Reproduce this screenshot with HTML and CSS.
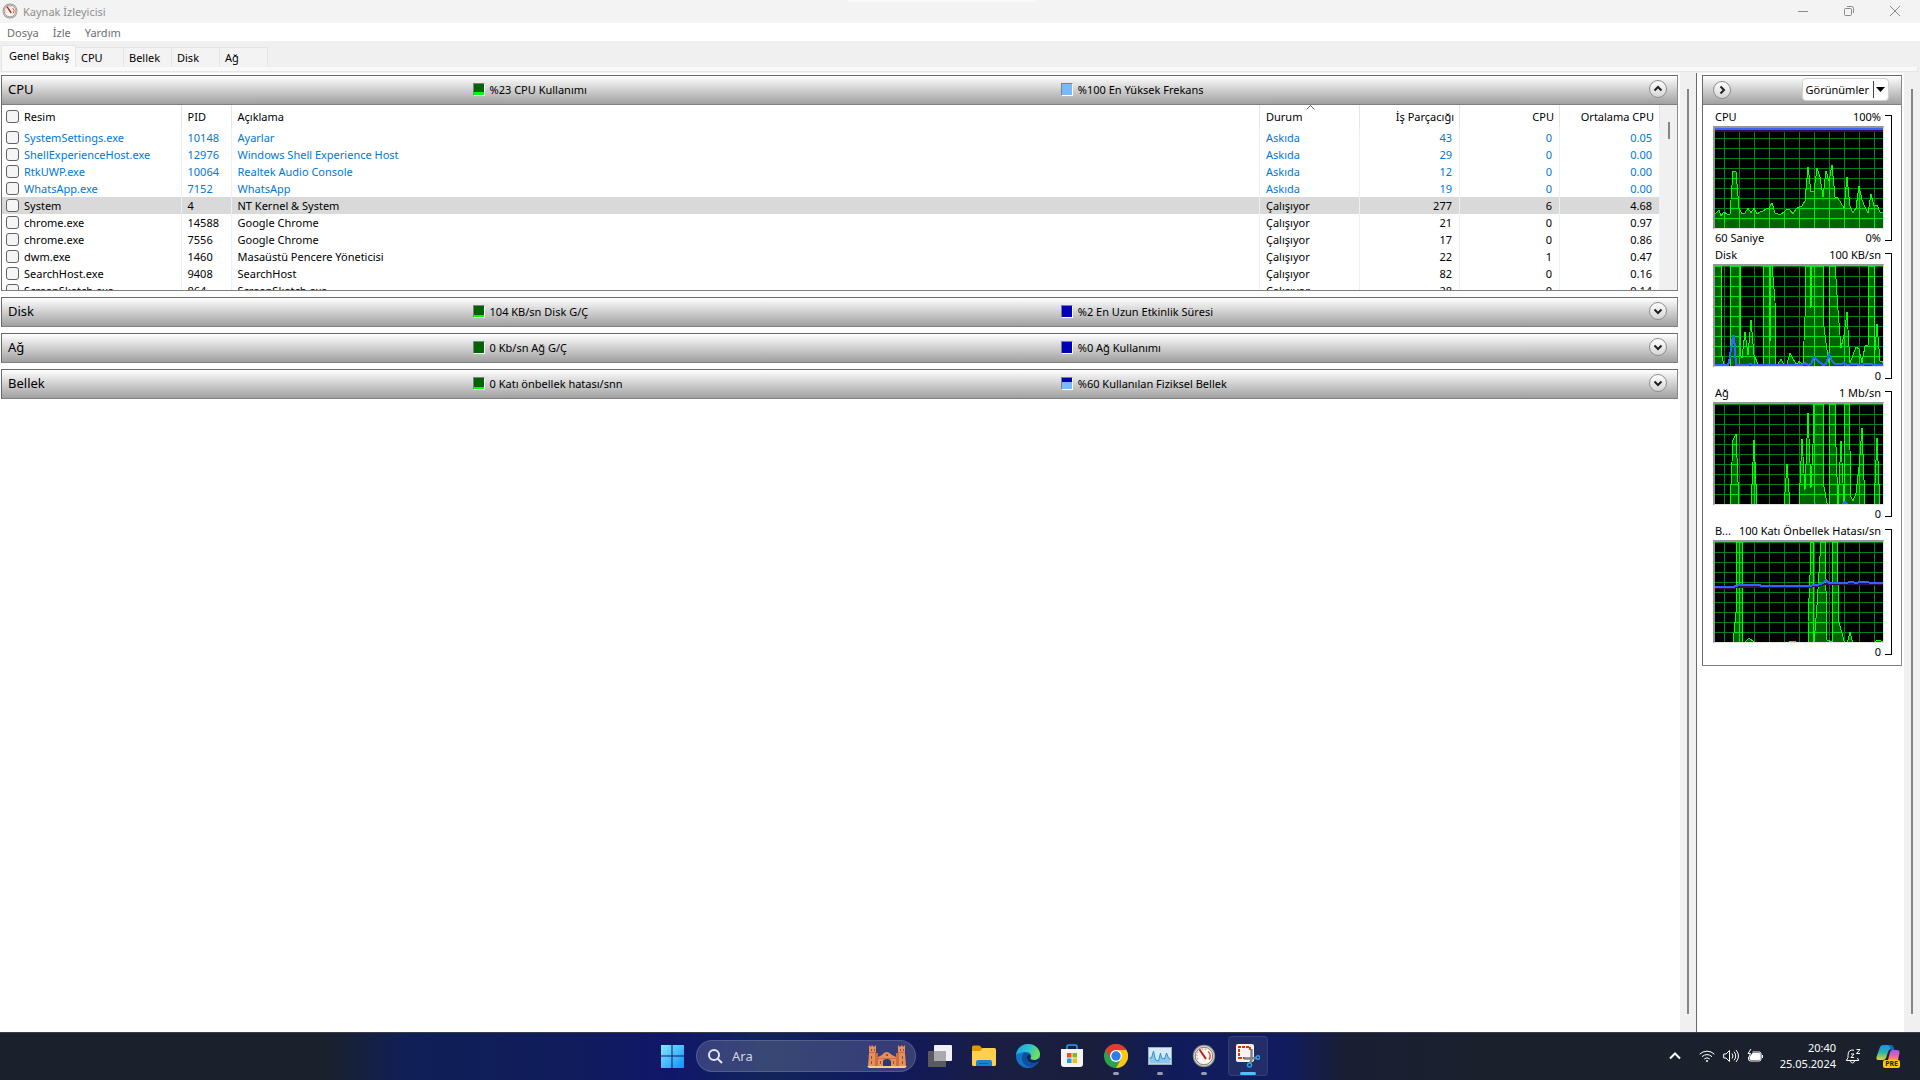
FILE: index.html
```html
<!DOCTYPE html>
<html lang="tr">
<head>
    <meta charset="UTF-8">
    <meta name="viewport" content="width=device-width, initial-scale=1.0">
    <title>Kaynak İzleyicisi</title>
    <link rel="stylesheet" href="styles.css">
</head>
<body>
<div class="top-handle"></div>

<!-- Title bar -->
<header class="title-bar">
    <svg class="app-icon" viewBox="0 0 24 24"><use href="#gauge"/></svg>
    <h1>Kaynak İzleyicisi</h1>
    <div class="window-buttons">
        <button type="button" aria-label="Simge durumuna küçült"><svg viewBox="0 0 12 12"><path d="M1 6.500h10"/></svg></button>
        <button type="button" aria-label="Önceki boyut"><svg viewBox="0 0 12 12"><rect x="1.500" y="3.500" width="7" height="7" rx="1"/><path d="M4 1.500h4.500q2 0 2 2V8"/></svg></button>
        <button type="button" aria-label="Kapat"><svg viewBox="0 0 12 12"><path d="M1 1l10 10M11 1L1 11"/></svg></button>
    </div>
</header>

<!-- Menu -->
<nav class="menu-bar">
    <button type="button">Dosya</button>
    <button type="button">İzle</button>
    <button type="button">Yardım</button>
</nav>

<!-- Tabs -->
<div class="tabs" role="tablist">
    <button type="button" role="tab" class="tab tab-active" aria-selected="true">Genel Bakış</button>
    <button type="button" role="tab" class="tab">CPU</button>
    <button type="button" role="tab" class="tab">Bellek</button>
    <button type="button" role="tab" class="tab">Disk</button>
    <button type="button" role="tab" class="tab">Ağ</button>
</div>
<div class="tab-edge"></div>

<main class="content">
    <div class="sections">
        <section class="section">
            <div class="section-header">
                <h2>CPU</h2>
                <span class="meter"><i class="swatch green level-23"></i>%23 CPU Kullanımı</span>
                <span class="meter"><i class="swatch blue level-100"></i>%100 En Yüksek Frekans</span>
                <button type="button" class="round" aria-label="Daralt"><svg viewBox="0 0 10 10"><path d="M1.500 6.500L5 3l3.500 3.500"/></svg></button>
            </div>
            <div class="process-list">
                <table>
                    <colgroup>
                        <col class="col-name"><col class="col-pid"><col><col class="col-num"><col class="col-num"><col class="col-num"><col class="col-num">
                    </colgroup>
                    <thead>
                    <tr>
                        <th><input type="checkbox" aria-label="Tümünü seç">Resim</th>
                        <th>PID</th>
                        <th>Açıklama</th>
                        <th class="sorted">Durum<svg class="sort-mark" viewBox="0 0 9 5"><path d="M.5 4.500l4-4 4 4"/></svg></th>
                        <th class="num">İş Parçacığı</th>
                        <th class="num">CPU</th>
                        <th class="num">Ortalama CPU</th>
                    </tr>
                    </thead>
                    <tbody>
                    <tr class="suspended"><td><input type="checkbox" id="p1"><label for="p1">SystemSettings.exe</label></td><td>10148</td><td>Ayarlar</td><td>Askıda</td><td class="num">43</td><td class="num">0</td><td class="num">0.05</td></tr>
                    <tr class="suspended"><td><input type="checkbox" id="p2"><label for="p2">ShellExperienceHost.exe</label></td><td>12976</td><td>Windows Shell Experience Host</td><td>Askıda</td><td class="num">29</td><td class="num">0</td><td class="num">0.00</td></tr>
                    <tr class="suspended"><td><input type="checkbox" id="p3"><label for="p3">RtkUWP.exe</label></td><td>10064</td><td>Realtek Audio Console</td><td>Askıda</td><td class="num">12</td><td class="num">0</td><td class="num">0.00</td></tr>
                    <tr class="suspended"><td><input type="checkbox" id="p4"><label for="p4">WhatsApp.exe</label></td><td>7152</td><td>WhatsApp</td><td>Askıda</td><td class="num">19</td><td class="num">0</td><td class="num">0.00</td></tr>
                    <tr class="selected"><td><input type="checkbox" id="p5"><label for="p5">System</label></td><td>4</td><td>NT Kernel &amp; System</td><td>Çalışıyor</td><td class="num">277</td><td class="num">6</td><td class="num">4.68</td></tr>
                    <tr><td><input type="checkbox" id="p6"><label for="p6">chrome.exe</label></td><td>14588</td><td>Google Chrome</td><td>Çalışıyor</td><td class="num">21</td><td class="num">0</td><td class="num">0.97</td></tr>
                    <tr><td><input type="checkbox" id="p7"><label for="p7">chrome.exe</label></td><td>7556</td><td>Google Chrome</td><td>Çalışıyor</td><td class="num">17</td><td class="num">0</td><td class="num">0.86</td></tr>
                    <tr><td><input type="checkbox" id="p8"><label for="p8">dwm.exe</label></td><td>1460</td><td>Masaüstü Pencere Yöneticisi</td><td>Çalışıyor</td><td class="num">22</td><td class="num">1</td><td class="num">0.47</td></tr>
                    <tr><td><input type="checkbox" id="p9"><label for="p9">SearchHost.exe</label></td><td>9408</td><td>SearchHost</td><td>Çalışıyor</td><td class="num">82</td><td class="num">0</td><td class="num">0.16</td></tr>
                    <tr><td><input type="checkbox" id="p10"><label for="p10">ScreenSketch.exe</label></td><td>864</td><td>ScreenSketch.exe</td><td>Çalışıyor</td><td class="num">28</td><td class="num">0</td><td class="num">0.14</td></tr>
                    </tbody>
                </table>
                <div class="list-scroll"><span></span></div>
            </div>
        </section>

        <section class="section">
            <div class="section-header">
                <h2>Disk</h2>
                <span class="meter"><i class="swatch green level-low"></i>104 KB/sn Disk G/Ç</span>
                <span class="meter"><i class="swatch blue"></i>%2 En Uzun Etkinlik Süresi</span>
                <button type="button" class="round" aria-label="Genişlet"><svg viewBox="0 0 10 10"><path d="M1.500 3.500L5 7l3.500-3.500"/></svg></button>
            </div>
        </section>
        <section class="section">
            <div class="section-header">
                <h2>Ağ</h2>
                <span class="meter"><i class="swatch green"></i>0 Kb/sn Ağ G/Ç</span>
                <span class="meter"><i class="swatch blue"></i>%0 Ağ Kullanımı</span>
                <button type="button" class="round" aria-label="Genişlet"><svg viewBox="0 0 10 10"><path d="M1.500 3.500L5 7l3.500-3.500"/></svg></button>
            </div>
        </section>
        <section class="section">
            <div class="section-header">
                <h2>Bellek</h2>
                <span class="meter"><i class="swatch green level-low"></i>0 Katı önbellek hatası/snn</span>
                <span class="meter"><i class="swatch blue level-60"></i>%60 Kullanılan Fiziksel Bellek</span>
                <button type="button" class="round" aria-label="Genişlet"><svg viewBox="0 0 10 10"><path d="M1.500 3.500L5 7l3.500-3.500"/></svg></button>
            </div>
        </section>
    </div>
    <div class="scrollbar"><span></span></div>

    <!-- Graphs -->
    <aside class="graphs">
        <div class="graph-panel">
            <div class="graph-header">
                <button type="button" class="round" aria-label="Grafikleri gizle"><svg viewBox="0 0 10 10"><path d="M3.500 1.500L7 5 3.500 8.500"/></svg></button>
                <button type="button" class="views"><span>Görünümler</span><svg viewBox="0 0 9 5"><path d="M0 0h9L4.500 5z"/></svg></button>
            </div>

            <figure class="graph">
                <figcaption><span>CPU</span><span>100%</span></figcaption>
                <svg class="plot" viewBox="0 0 168 100" preserveAspectRatio="none">
                    <defs><pattern id="grid" x="9" y="0" width="15" height="10" patternUnits="userSpaceOnUse"><path d="M.5 0v10M0 .5h15"/></pattern></defs>
                    <rect class="grid" width="168" height="100"/>
                    <path class="area" d="M-2 102L0 86 4 82 6 88 9 84 12 86 15 86 18 43 21 44 24 80 27 86 30 85 33 80 36 85 39 80 42 86 45 84 48 83 51 81 54 80 57 75 60 85 63 86 66 86 69 84 72 81 75 82 78 86 81 81 84 79 87 78 90 73 93 39 96 64 99 63 102 40 105 49 108 69 111 43 114 53 117 37 120 69 123 70 126 75 129 80 132 49 135 78 138 85 141 80 144 58 147 72 150 79 153 85 156 66 159 78 162 77 165 84 170 84 170 102z"/>
                    <path class="shade" d="M0 3H168"/>
                    <path class="line" d="M0 1H168"/>
                </svg>
                <div class="graph-foot"><span>60 Saniye</span><span>0%</span></div>
            </figure>

            <figure class="graph">
                <figcaption><span>Disk</span><span>100 KB/sn</span></figcaption>
                <svg class="plot" viewBox="0 0 168 100" preserveAspectRatio="none">
                    <rect class="grid" width="168" height="100"/>
                    <path class="area" d="M-2 102L0-2 6-2 7 90 9 99 12 102 15 102 15-2 25-2 25 88 27 92 30 66 33 89 36 54 39 89 44 100 48 102 48-2 54-2 55 77 56-2 57-2 60 35 61 99 63 98 66 93 69 99 72 98 75 87 78 93 82 99 84 95 88 99 90 51 91-2 95-2 96 42 97-2 108-2 109 61 111 77 114 97 114-2 120-2 123 44 126 82 129 69 132 46 135 97 138 89 141 81 144 83 147 97 150 80 153 79 153-2 159-2 159 98 162 58 165 95 170 97 170 102z"/>
                    <path class="line" d="M0 99H13L14 96 18 70 19 70 21 99 33 99 35 98 38 99 87 99 90 97 93 99 96 98 99 91 102 94 108 99 111 98 114 88 117 95 120 98 126 98 129 97 132 99 138 98 147 99 150 98 156 98 159 99 168 99"/>
                </svg>
                <div class="graph-foot"><span></span><span>0</span></div>
            </figure>

            <figure class="graph">
                <figcaption><span>Ağ</span><span>1 Mb/sn</span></figcaption>
                <svg class="plot" viewBox="0 0 168 100" preserveAspectRatio="none">
                    <rect class="grid" width="168" height="100"/>
                    <path class="area" d="M-2 102L15 102 18 36 21 30 24 102 36 102 39 36 42 102 69 102 72 60 75 102 84 102 87 35 90 86 93 9 96 84 98 40 99-2 108-2 109 83 112 99 114 102 114-2 120-2 121 43 123 102 126 37 129 100 130-2 134-2 136 93 138 97 141 89 144 63 147 24 150 102 159 102 162 34 165 102 170 102z"/>
                    <path class="line" d="M98 101l2-1 1 1M127 101l3-3 3 3"/>
                </svg>
                <div class="graph-foot"><span></span><span>0</span></div>
            </figure>

            <figure class="graph">
                <figcaption><span>B...</span><span>100 Katı Önbellek Hatası/sn</span></figcaption>
                <svg class="plot" viewBox="0 0 168 100" preserveAspectRatio="none">
                    <rect class="grid" width="168" height="100"/>
                    <path class="area" d="M-2 102L18 102 21 70 21-2 27-2 28 102 31 99 34 96 39 100 41 102 74 102 75 99 80 99 81 102 93 102 93 80 95 33 95-2 98-2 99 102 102 63 106-2 110-2 112 98 117 100 117-2 122-2 124 80 129 99 132 102 135 90 138 102 159 102 162 98 166 99 170 99 170 102z"/>
                    <path class="shade" d="M0 46H18L24 45 46 45 93 45 102 44 108 42 168 42"/>
                    <path class="line" d="M0 45H18L21 44 24 43 45 43 46 44 93 44 102 43 108 41 111 38 114 41 132 41 134 40 138 40 140 41 146 40 153 40 155 41 168 41"/>
                </svg>
                <div class="graph-foot"><span></span><span>0</span></div>
            </figure>
        </div>
    </aside>
    <div class="scrollbar"><span></span></div>
</main>

<!-- Taskbar -->
<footer class="taskbar">
    <div class="apps">
        <button type="button" class="app" aria-label="Başlat">
            <svg viewBox="0 0 24 24"><defs><linearGradient id="win" x1="0" y1="0" x2="24" y2="24" gradientUnits="userSpaceOnUse"><stop offset="0" stop-color="#8cecff"/><stop offset="1" stop-color="#0a92f5"/></linearGradient></defs><path fill="url(#win)" d="M1 1h10.500v10.500H1zM12.500 1H24v10.500H12.500zM1 12.500h10.500V24H1zM12.500 12.500H24V24H12.500z"/></svg>
        </button>
        <div class="search">
            <svg class="search-icon" viewBox="0 0 16 16"><circle cx="7" cy="7" r="5"/><path d="M10.500 10.500L15 15"/></svg>
            <input type="text" placeholder="Ara" aria-label="Ara">
            <svg class="castle" viewBox="0 0 40 25">
                <path fill="#e58f5c" d="M1 22L2 9V1l2 2 1-2 2 2 2-2v8h2v4l4-2q4-6 10 0l4 2V9h2V1l2 2 2-2 1 2 2-2v8l1 13z"/>
                <path fill="#c96f45" d="M8 9h3v13H8zM29 9h3v13h-3zM2 8h7v1H2zM31 8h7v1h-7zM11 14h18v1H11z"/>
                <path fill="#2c3a72" d="M16 22v-4q0-3 4-3t4 3v4z"/>
                <path fill="#9b4a35" d="M4 5h1v2H4zM7 5h1v2H7zM33 5h1v2h-1zM36 5h1v2h-1zM4 12h1v3H4zM35 12h1v3h-1zM4 17h1v3H4zM35 17h1v3h-1zM13 17h1v3h-1zM26 17h1v3h-1zM19 10h2v2h-2z"/>
                <path fill="#f7cf85" d="M0 22h40l-2 2H2z"/>
            </svg>
        </div>
        <button type="button" class="app" aria-label="Görev görünümü">
            <svg viewBox="0 0 24 24"><rect x="6" y="1" width="18" height="16" rx="1" fill="#f1f1f5"/><rect x="0" y="7" width="18" height="16" rx="1" fill="#5b5b5f"/><path fill="#a9a9ae" d="M6 7h12v10H6z"/></svg>
        </button>
        <button type="button" class="app" aria-label="Dosya Gezgini">
            <svg viewBox="0 0 24 24"><path fill="#e09a00" d="M0 3q0-1.500 1.500-1.500h6L10 4h12v6H0z"/><path fill="#ffd04d" d="M0 7h8l3-3h11.500Q24 4 24 5.500v15q0 1.500-1.500 1.500h-21Q0 22 0 20.500z"/><path fill="#1784cf" d="M4 22v-4q0-2 2-2h12q2 0 2 2v4z"/><path fill="#0c5fa5" d="M7 19h9v1H7z"/></svg>
        </button>
        <button type="button" class="app" aria-label="Edge">
            <svg viewBox="0 0 24 24"><defs><linearGradient id="edge" x1="0" y1="0" x2="1" y2=".4"><stop offset="0" stop-color="#1d9de2"/><stop offset=".55" stop-color="#2fc3cf"/><stop offset="1" stop-color="#6ee05a"/></linearGradient></defs><circle cx="12" cy="12" r="12" fill="#1273c9"/><path fill="url(#edge)" d="M0 11C1 4 6 0 12 0c7 0 12 5 12 10 0 4-3 6-6 6-3 0-4-1-3.500-2 2-3 0-6-4-6C5 8 1 10 0 11z"/><path fill="#0c4f9e" d="M8 9c-3 3-3 10 3 13 5 2 9 0 11-4-4 2-9 1-11-3-1-2-.5-4 1-5-1-1-2.500-2-4-1z"/><path fill="#12255c" d="M14.500 14c-.5 1 .5 2 3.500 2 2 0 4-.5 5-2l1 1-2 3c-4 2-9 1-11-3-1-2 0-4 1.500-5 2 1 3 2 2 4z"/></svg>
        </button>
        <button type="button" class="app" aria-label="Microsoft Store">
            <svg viewBox="0 0 24 24"><path fill="none" stroke="#2aa4e8" stroke-width="1.500" d="M7 7V3q0-2 2-2h6q2 0 2 2v4"/><path fill="#f4f4f6" d="M1 5h22v15q0 3-3 3H4q-3 0-3-3z"/><path fill="#f04e23" d="M7 9h4.500v4.500H7z"/><path fill="#7db928" d="M12.500 9H17v4.500h-4.500z"/><path fill="#1ba1e2" d="M7 14.500h4.500V19H7z"/><path fill="#fdb813" d="M12.500 14.500H17V19h-4.500z"/></svg>
        </button>
        <button type="button" class="app running" aria-label="Chrome">
            <svg viewBox="0 0 24 24"><circle cx="12" cy="12" r="12" fill="#2ca14e"/><path fill="#fbc815" d="M12 6h10.400A12 12 0 0 1 12 24l5.200-9z"/><path fill="#e33b2e" d="M1.600 6A12 12 0 0 1 22.400 6H12a6 6 0 0 0-5.200 9z"/><circle cx="12" cy="12" r="6" fill="#fff"/><circle cx="12" cy="12" r="4.700" fill="#2f7de9"/></svg>
        </button>
        <button type="button" class="app running" aria-label="Görev Yöneticisi">
            <svg viewBox="0 0 24 24"><rect x=".5" y="3.500" width="23" height="17" fill="#d4ecfa" stroke="#a5aeb5"/><path fill="#8cc8ee" d="M1.500 19.500V14h2l2-7 2 9 3 1 2-8 1 5 3 1 2-6 2 5 2 1v4.500z"/><path fill="none" stroke="#2f8fd0" d="M1.500 14h2l2-7 2 9 3 1 2-8 1 5 3 1 2-6 2 5 2 1"/></svg>
        </button>
        <button type="button" class="app running" aria-label="Kaynak İzleyicisi">
            <svg viewBox="0 0 24 24">
                <g id="gauge"><circle cx="12" cy="12" r="11.200" fill="#8d8a88"/><circle cx="12" cy="12" r="10.200" fill="#d9d6d2"/><circle cx="12" cy="12" r="8.700" fill="#fbf7f2" stroke="#6e6967" stroke-width=".8"/><path fill="none" stroke="#c9a58f" stroke-width="1.500" stroke-dasharray="1.500 1.500" d="M6 15a6.500 6.500 0 0 1 9-9"/><path fill="none" stroke="#e04a2b" stroke-width="1.500" d="M16 7.500a6 6 0 0 1 1 8"/><path fill="none" stroke="#c41818" stroke-width="2" d="M7.500 5.500L14 15"/></g>
            </svg>
        </button>
        <button type="button" class="app running active" aria-label="Ekran Alıntısı Aracı">
            <svg viewBox="0 0 24 24"><rect width="18" height="18" rx="2" fill="#f7f4f3"/><path fill="none" stroke="#d83b01" stroke-width="2" stroke-dasharray="3 1" d="M5 14H3V3h11v3"/><path fill="none" stroke="#d83b01" stroke-width="2" stroke-dasharray="3 1" d="M3 14h6"/><path fill="none" stroke="#7d7f83" stroke-width="2.400" d="M15.500 5v9.500L20 14M8 14.500h8l-2 5"/><circle cx="13.500" cy="21" r="2" fill="none" stroke="#23a6e6" stroke-width="1.500"/><circle cx="22" cy="13.500" r="1.800" fill="none" stroke="#23a6e6" stroke-width="1.500"/></svg>
        </button>
    </div>

    <div class="tray">
        <button type="button" class="tray-button" aria-label="Gizli simgeler"><svg class="chevron" viewBox="0 0 16 16"><path d="M3 10.500l5-5 5 5"/></svg></button>
        <button type="button" class="tray-button quick" aria-label="Hızlı ayarlar">
            <svg viewBox="0 0 16 16"><path d="M.7 6.200a10.300 10.300 0 0 1 14.600 0M3 8.700a7 7 0 0 1 10 0M5.300 11a4 4 0 0 1 5.400 0"/><circle class="solid" cx="8" cy="13" r="1"/></svg>
            <svg viewBox="0 0 16 16"><path d="M.7 6v4H3l3.500 3.500v-11L3 6zM9 5.500q2 2.500 0 5M11 3.700q3.500 4.300 0 8.600M13 2q5 6 0 12"/></svg>
            <svg viewBox="0 0 16 16"><path class="solid" d="M5.500 5H12q1.500 0 1.500 1.500v4Q13.500 12 12 12H4q-1.500 0-1.500-1.500V9z"/><path d="M5.500 4H12q2 0 2 2v5q0 2-2 2H3.500q-2 0-2-2V9M15.500 7v3M4 1L1 5.500h2.500L2 9"/></svg>
        </button>
        <time class="clock"><span>20:40</span><span>25.05.2024</span></time>
        <button type="button" class="tray-button" aria-label="Bildirimler"><svg viewBox="0 0 16 16"><path d="M9 2.200Q3 1 3 7.500v2.200L1.300 12.500h12.400L12.500 10M5.500 13q.5 2 2 2t2-2M6 6h3L6 9.500h3M11.500 1.500H15L11.500 5.500H15"/></svg></button>
        <button type="button" class="copilot" aria-label="Copilot">
            <svg viewBox="0 0 24 24"><defs><linearGradient id="cop1" x1="0" y1="0" x2="0" y2="1"><stop offset="0" stop-color="#1c8fe8"/><stop offset=".5" stop-color="#2cb5a5"/><stop offset="1" stop-color="#e8d22c"/></linearGradient><linearGradient id="cop2" x1="0" y1="0" x2="0" y2="1"><stop offset="0" stop-color="#9a5cf0"/><stop offset=".6" stop-color="#f060a8"/><stop offset="1" stop-color="#ff9c50"/></linearGradient></defs><path fill="url(#cop1)" d="M7 1h7q2 0 2.500 2L17 5h-2q-2 0-3 3l-2 6q-1 2-3 2H2q-2 0-1.500-3L4 3q1-2 3-2z"/><path fill="#1764c8" d="M12 1h3q2 0 2.500 2l1 3H15q-1-4-3-5z"/><path fill="url(#cop2)" d="M16 6h5q3 0 2.500 3L22 16H12l2-8q1-2 2-2z"/></svg>
            <span class="badge">PRE</span>
        </button>
    </div>
</footer>
</body>
</html>
```
FILE: styles.css
```css
* {
    margin: 0;
    padding: 0;
    box-sizing: border-box;
}

body {
    font-family: "Noto Sans", "Open Sans", sans-serif;
    font-size: 11px;
    line-height: 17px;
    color: #000;
    background-color: #f0f0f0;
    display: flex;
    flex-direction: column;
    height: 100vh;
    overflow: hidden;
}

button,
input {
    font: inherit;
    color: inherit;
    background: none;
    border: none;
}

svg {
    display: block;
}

.top-handle {
    position: absolute;
    top: 0;
    left: 50%;
    width: 188px;
    height: 2px;
    margin-left: -112px;
    background-color: #fafafa;
    border-radius: 0 0 4px 4px;
}

/* Title bar */
.title-bar {
    display: flex;
    align-items: center;
    gap: 5px;
    height: 23px;
    padding: 0 2px 1px;
    background-color: #f3f3f3;
    color: #8f8f8f;
}

.title-bar h1 {
    flex: 1;
    font-size: 11px;
    font-weight: normal;
}

.app-icon {
    width: 16px;
    height: 16px;
}

.window-buttons {
    display: flex;
}

.window-buttons button {
    width: 46px;
    height: 20px;
    display: flex;
    align-items: center;
    justify-content: center;
}

.window-buttons svg {
    width: 12px;
    height: 12px;
    fill: none;
    stroke: #8a8a8a;
}

/* Menu */
.menu-bar {
    display: flex;
    gap: 14px;
    height: 18px;
    padding-left: 7px;
    background-color: #fff;
    color: #6d6d6d;
}

/* Tabs */
.tabs {
    display: flex;
    align-items: flex-end;
    height: 26px;
    padding-left: 1px;
}

.tab {
    min-width: 48px;
    height: 20px;
    padding: 0 6px 1px 5px;
    text-align: left;
    background-color: #f3f3f3;
    border: 1px solid #e5e5e5;
    border-width: 1px 1px 0 0;
}

.tab-active {
    width: 75px;
    height: 22px;
    padding: 0 6px 3px 7px;
    background-color: #f9f9f9;
    border-left-width: 1px;
    white-space: nowrap;
}

.tab-edge {
    height: 5px;
    margin: 0 2px 1px 1px;
    background-color: #f9f9f9;
    border: 1px solid #e5e5e5;
    border-top: none;
}

/* Content */
.content {
    flex: 1;
    min-height: 0;
    display: flex;
    background-color: #fff;
}

.sections {
    flex: 1;
    min-width: 0;
    display: flex;
    flex-direction: column;
    gap: 6px;
    padding: 2px 2px 0 1px;
}

.section {
    border: 1px solid #696969;
    border-right-color: #8a8a8a;
    border-bottom-color: #808080;
}

.section-header {
    display: grid;
    grid-template-columns: 28fr 35fr 35fr 28px;
    align-items: center;
    height: 28px;
    padding-bottom: 2px;
    background: linear-gradient(#fff, #ececec 20%, #a0a0a0);
}

.section-header h2 {
    padding-left: 6px;
    font-size: 13px;
    font-weight: normal;
}

.meter {
    display: flex;
    align-items: center;
    gap: 5px;
}

.swatch {
    width: 12px;
    height: 13px;
    border: 1px solid #808080;
    border-right-color: #fff;
    border-bottom-color: #fff;
}

.green {
    background-color: #006400;
}

.blue {
    background-color: #0000b4;
}

.level-low {
    background-image: linear-gradient(transparent 85%, #00ff00 85%);
}

.level-23 {
    background-image: linear-gradient(transparent 73%, #00ff00 73%);
}

.level-60 {
    background-image: linear-gradient(transparent 38%, #78b9ff 38%);
}

.level-100 {
    background-color: #78b9ff;
}

.round {
    width: 18px;
    height: 18px;
    display: flex;
    align-items: center;
    justify-content: center;
    background: linear-gradient(#fff, #d5d5d5);
    border: 1px solid #8d8d8d;
    border-radius: 50%;
}

.round svg {
    width: 10px;
    height: 10px;
    fill: none;
    stroke: #222;
    stroke-width: 2;
}

/* Process list */
.process-list {
    display: flex;
    height: 186px;
    border-top: 1px solid #808080;
    overflow: hidden;
}

table {
    flex: 1;
    height: max-content;
    table-layout: fixed;
    border-collapse: collapse;
    width: 100%;
}

.col-name {
    width: 179px;
}

.col-pid {
    width: 50px;
}

.col-num {
    width: 100px;
}

th,
td {
    height: 17px;
    padding: 0 6px;
    text-align: left;
    font-weight: normal;
    line-height: 17px;
    white-space: nowrap;
    border-right: 1px solid #e8f1fa;
}

th {
    height: 24px;
    padding-bottom: 2px;
    border-right-color: #e5e5e5;
}

th:first-child,
td:first-child {
    padding-left: 4px;
}

.num {
    text-align: right;
}

td.num {
    padding-right: 7px;
}

th.num {
    padding-right: 5px;
}

.sorted {
    position: relative;
}

.sort-mark {
    position: absolute;
    top: 0;
    left: 46px;
    width: 9px;
    height: 5px;
    fill: none;
    stroke: #666;
}

.suspended {
    color: #0078d7;
}

.selected {
    background-color: #d9d9d9;
}

input[type="checkbox"] {
    appearance: none;
    width: 13px;
    height: 13px;
    margin-right: 5px;
    vertical-align: -2px;
    background-color: #f5f5f5;
    border: 1px solid #626262;
    border-radius: 3px;
}

.list-scroll {
    width: 17px;
    padding: 17px 0 0 8px;
    background-color: #f0f0f0;
}

.list-scroll span {
    display: block;
    width: 2px;
    height: 17px;
    background-color: #858585;
}

.scrollbar {
    width: 16px;
    padding: 16px 7px 18px;
    background-color: #f0f0f0;
}

.scrollbar span {
    display: block;
    width: 2px;
    height: 100%;
    background-color: #858585;
}

/* Graphs */
.graphs {
    width: 208px;
    padding: 2px 2px 0 5px;
    border-left: 1px solid #696969;
}

.graph-panel {
    padding-bottom: 4px;
    border: 1px solid #696969;
    border-right-color: #8a8a8a;
    border-bottom-color: #808080;
}

.graph-header {
    display: flex;
    align-items: center;
    justify-content: space-between;
    height: 29px;
    margin-bottom: 4px;
    padding: 0 12px 1px 10px;
    background: linear-gradient(#fff, #ececec 20%, #a0a0a0);
    border-bottom: 1px solid #808080;
}

.views {
    display: flex;
    align-items: center;
    gap: 2px;
    height: 23px;
    padding: 0 3px;
    background-color: #fdfdfd;
    border: 1px solid #d0d0d0;
    border-radius: 4px;
}

.views span {
    padding-right: 4px;
    border-right: 1px solid #444;
}

.views svg {
    width: 9px;
    height: 5px;
}

.graph {
    position: relative;
    height: 138px;
    padding: 0 17px 0 10px;
}

/* Scale bracket next to each graph */
.graph::after {
    content: "";
    position: absolute;
    top: 6px;
    right: 9px;
    width: 6px;
    height: 124px;
    border: 1px solid #000;
    border-left: none;
}

.graph figcaption,
.graph-foot {
    display: flex;
    justify-content: space-between;
    height: 17px;
    padding: 0 3px 0 2px;
    line-height: 15px;
    white-space: nowrap;
}

.graph-foot {
    line-height: 17px;
}

.plot {
    width: 100%;
    height: 103px;
    background-color: #000;
    border: 1px solid #e3e3e3;
    border-top: 2px solid #969696;
    border-left: 2px solid #969696;
    isolation: isolate;
}

.plot path {
    shape-rendering: crispEdges;
}

.plot pattern path {
    fill: none;
    stroke: #008018;
}

.grid {
    fill: url(#grid);
}

.area {
    fill: #006400;
    stroke: #00ff00;
    mix-blend-mode: plus-lighter;
}

.line,
.shade {
    fill: none;
    stroke: #3264ff;
    stroke-width: 2;
}

.shade {
    stroke: #3c0a50;
}

/* Taskbar */
.taskbar {
    position: relative;
    display: flex;
    justify-content: center;
    align-items: center;
    height: 48px;
    padding-bottom: 1px;
    border-top: 1px solid #3a3e4a;
    background: linear-gradient(90deg, #1a212c 0%, #1a212c 17%, #101f56 21%, #101c5c 30%, #10176a 35%, #12255a 40%, #10195f 46%, #1a1e42 52%, #1a1e3c 57%, #101c5a 61%, #101c5e 67%, #1a1e34 70%, #1a212c 78%, #1a212c 100%);
    color: #fff;
}

.apps {
    display: flex;
    gap: 4px;
}

.app {
    position: relative;
    width: 40px;
    height: 40px;
    padding: 7px;
    border: 1px solid transparent;
    border-radius: 4px;
}

.app svg {
    width: 24px;
    height: 24px;
}

.running::after {
    content: "";
    position: absolute;
    left: 16px;
    bottom: 0;
    width: 6px;
    height: 3px;
    background-color: #9a9cae;
    border-radius: 2px;
}

.active {
    background-color: rgba(255, 255, 255, 0.08);
    border-color: rgba(255, 255, 255, 0.08);
}

.active::after {
    left: 11px;
    width: 16px;
    background-color: #4cc2ff;
}

.search {
    display: flex;
    align-items: center;
    gap: 9px;
    width: 220px;
    height: 32px;
    margin: 4px 0;
    padding: 0 8px 0 10px;
    background-color: rgba(255, 255, 255, 0.16);
    border: 1px solid rgba(255, 255, 255, 0.14);
    border-radius: 16px;
    font-size: 13px;
}

.search input {
    flex: 1;
    min-width: 0;
}

.search input::placeholder {
    color: #d2d4e0;
    opacity: 1;
}

.search-icon {
    width: 16px;
    height: 16px;
    fill: none;
    stroke: #e4e6f0;
    stroke-width: 2;
}

.castle {
    width: 40px;
    height: 25px;
}

.tray {
    position: absolute;
    top: 0;
    right: 20px;
    height: 46px;
    display: flex;
    align-items: center;
}

.tray svg {
    width: 16px;
    height: 16px;
    fill: none;
    stroke: #fff;
}

.tray .solid {
    fill: #fff;
    stroke: none;
}

.tray .chevron {
    stroke-width: 2;
}

.quick {
    display: flex;
    gap: 8px;
    margin-left: 16px;
}

.clock {
    display: flex;
    flex-direction: column;
    align-items: flex-end;
    width: 73px;
    margin-right: 9px;
    line-height: 16px;
}

.tray .copilot {
    position: relative;
    margin-left: 15px;
}

.tray .copilot svg {
    width: 24px;
    height: 24px;
    stroke: none;
}

.badge {
    position: absolute;
    right: 0;
    bottom: 0;
    padding: 0 2px;
    font-size: 7px;
    font-weight: bold;
    line-height: 8px;
    color: #222;
    background-color: #ffc60a;
    border-radius: 2px;
}
```
